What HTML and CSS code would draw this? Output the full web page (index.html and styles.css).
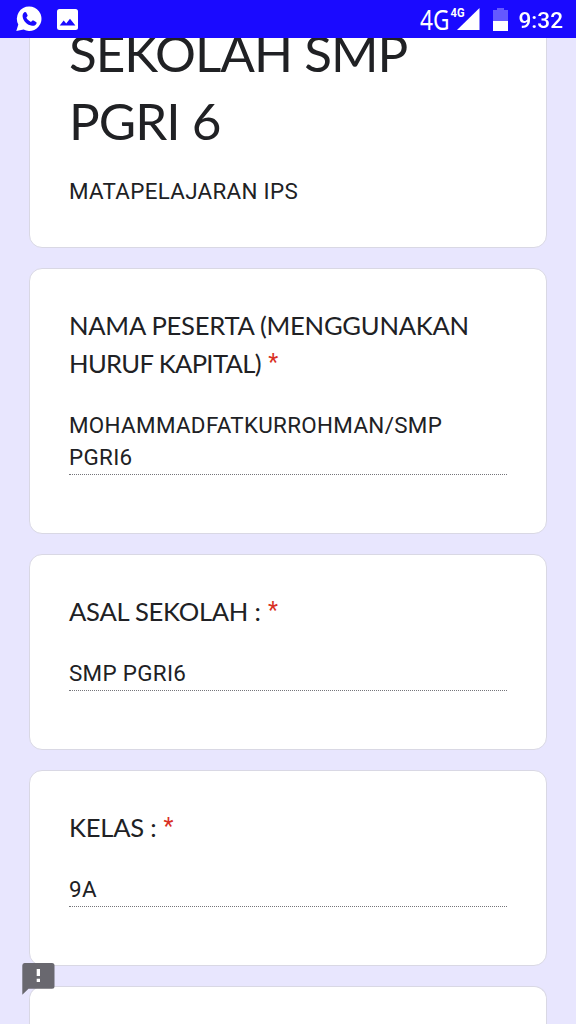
FILE: index.html
```
<!DOCTYPE html>
<html lang="id">
<head>
  <meta charset="UTF-8" />
  <meta name="viewport" content="width=device-width, initial-scale=1" />
  <title>Sekolah SMP PGRI 6</title>
  <link rel="stylesheet" href="styles.css">
</head>
<body>

  <!-- Status bar -->
  <header class="status-bar">
    <div class="status-left">
      <svg width="26" height="26" viewBox="0 0 26 26">
        <path fill="#fff" d="M13.3 .6a12.2 12.2 0 1 1-5.7 23L.3 25l2-6.4A12.2 12.2 0 0 1 13.3 .6z"/>
        <path fill="#1a0aff" d="M8.4 6.2c.6-.5 1.4-.4 1.8.3l1.3 2.4c.3.6.1 1.1-.3 1.6l-.9 1c1 2 2.500 3.500 4.700 4.400l1.100-1.100c.4-.4.9-.5 1.500-.2l2.400 1.300c.6.3.8.9.5 1.500-.8 1.900-2.500 2.700-4.500 2.300-5-.9-8.800-4.500-9.400-9.300-.2-1.800.5-3.200 1.800-4.200z"/>
      </svg>
      <svg width="21" height="21" viewBox="0 0 21 21">
        <rect width="21" height="21" rx="2.500" fill="#fff"/>
        <path fill="#1a0aff" d="M2.700 16.500 6.700 11.600 9.200 14.400 13 9.800 18.400 16.500z"/>
      </svg>
    </div>
    <div class="status-right">
      <svg class="signal" width="62" height="26" viewBox="0 0 62 26">
        <text class="net" x="1" y="22" textLength="29.500" lengthAdjust="spacingAndGlyphs">4G</text>
        <path fill="#fff" d="M60.500 0v22H38z"/>
        <rect x="31" y="0" width="15.500" height="10" fill="#1a0aff"/>
        <text class="net-small" x="31.500" y="9" textLength="14" lengthAdjust="spacingAndGlyphs">4G</text>
      </svg>
      <svg class="battery" width="15" height="23" viewBox="0 0 15 23">
        <path fill="#6459ff" d="M4 0h7v2h4v11H0V2h4z"/>
        <path fill="#fff" d="M0 13h15v10H0z"/>
      </svg>
      <span class="clock">9:32</span>
    </div>
  </header>

  <main class="form">
    <section class="card card-title">
      <h1>SEKOLAH SMP<br>PGRI 6</h1>
      <p class="description">MATAPELAJARAN IPS</p>
    </section>

    <section class="card">
      <h2>NAMA PESERTA (MENGGUNAKAN<br><span class="tight">HURUF KAPITAL)</span> <span class="required">*</span></h2>
      <div class="answer">MOHAMMADFATKURROHMAN/SMP PGRI6</div>
    </section>

    <section class="card">
      <h2>ASAL SEKOLAH : <span class="required">*</span></h2>
      <div class="answer">SMP PGRI6</div>
    </section>

    <section class="card">
      <h2>KELAS : <span class="required">*</span></h2>
      <div class="answer">9A</div>
    </section>

    <section class="card card-next"></section>
  </main>

  <!-- Report a problem -->
  <div class="feedback">
    <svg width="33" height="32" viewBox="0 0 33 32">
      <path fill="#69686f" d="M2.500 0h27.500a2.500 2.500 0 0 1 2.500 2.500v20.700a2.500 2.500 0 0 1-2.500 2.500H6.500L.3 31.800V2.500A2.500 2.500 0 0 1 2.500 0z"/>
      <path fill="#fff" d="M14.700 6h3.300v7h-3.300zM14.700 15.800h3.300v3.300h-3.300z"/>
    </svg>
  </div>

</body>
</html>
```
FILE: styles.css
```
* {
  box-sizing: border-box;
}

body {
  margin: 0;
  height: 1024px;
  overflow: hidden;
  background: #e8e6fe;
  color: #202124;
  font-family: Roboto, sans-serif;
}

.status-bar {
  position: fixed;
  top: 0;
  left: 0;
  right: 0;
  z-index: 2;
  height: 38px;
  padding: 0 13px 0 16px;
  display: flex;
  justify-content: space-between;
  align-items: center;
  background: #1a0aff;
  color: #fff;
}

.status-left,
.status-right {
  display: flex;
  align-items: center;
}

.status-left {
  gap: 15px;
}

.status-right svg,
.status-left svg {
  display: block;
}

.net {
  font: 28px "Noto Sans", sans-serif;
  fill: #fff;
}

.net-small {
  font: bold 13px Roboto, sans-serif;
  fill: #fff;
}

.signal {
  margin-top: 4px;
  overflow: visible;
}

.battery {
  margin-left: 12px;
}

.clock {
  margin-left: 11px;
  font-size: 22.6px;
  font-weight: 500;
  line-height: 38px;
  padding-top: 3px;
}

.form {
  height: 1024px;
  overflow: hidden;
  display: flex;
  flex-direction: column;
  gap: 20.4px;
  padding: 0 29px;
}

.card {
  flex: none;
  padding: 37px 39px 58px;
  background: #fff;
  border: 1px solid #d9d8e4;
  border-radius: 13px;
}

.card-title {
  height: 247.6px;
  padding-bottom: 40px;
  display: flex;
  flex-direction: column;
  justify-content: flex-end;
}

.card-next {
  flex: 1;
  padding: 0;
  border-bottom: 0;
  border-radius: 13px 13px 0 0;
}

h1 {
  margin: 0 0 21px;
  font-family: Lato, sans-serif;
  font-size: 51.2px;
  font-weight: 400;
  line-height: 68px;
  letter-spacing: -1px;
}

.description {
  margin: 0;
  font-size: 22.4px;
  line-height: 32px;
  letter-spacing: 0.3px;
}

h2 {
  margin: 0 0 26.2px;
  font-family: Lato, sans-serif;
  font-size: 25.6px;
  font-weight: 400;
  line-height: 38.4px;
  letter-spacing: -0.25px;
}

.tight {
  letter-spacing: -0.65px;
}

.required {
  margin-left: 1px;
  color: #d93025;
  font-family: Roboto, sans-serif;
  font-size: 23px;
  line-height: 20px;
  vertical-align: 3px;
}

.answer {
  padding-bottom: 1px;
  font-size: 22.4px;
  line-height: 32px;
  letter-spacing: 0.32px;
  border-bottom: 1px dotted #75757a;
}

.feedback {
  position: fixed;
  left: 22px;
  bottom: 29px;
  z-index: 1;
}

.feedback svg {
  display: block;
}
```
